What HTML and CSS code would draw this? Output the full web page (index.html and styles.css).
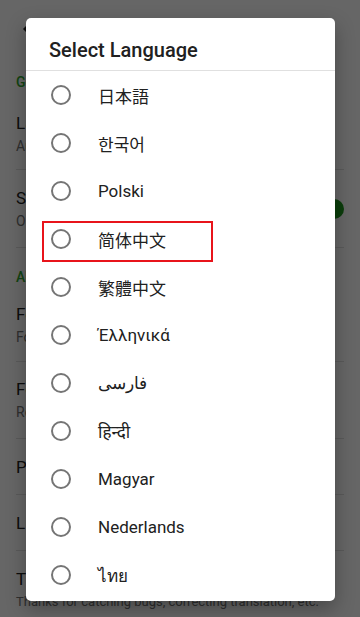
FILE: index.html
```html
<!DOCTYPE html>
<html lang="en">
<head>
    <meta charset="UTF-8">
    <meta name="viewport" content="width=device-width, initial-scale=1.0">
    <title>Settings</title>
    <link rel="stylesheet" href="styles.css">
</head>
<body>
    <!-- Settings screen behind the dialog -->
    <div class="settings">
        <div class="toolbar">
            <svg class="back" width="24" height="24" viewBox="0 0 24 24">
                <path d="M20 11H7.83l5.59-5.59L12 4l-8 8 8 8 1.41-1.41L7.83 13H20v-2z" fill="#212121"/>
            </svg>
        </div>

        <div class="section">General</div>
        <div class="item item-first">
            <div class="item-title">Language</div>
            <div class="item-sub">Auto</div>
        </div>
        <div class="item item-switch">
            <div class="item-text">
                <div class="item-title">Show notifications</div>
                <div class="item-sub">On</div>
            </div>
            <div class="switch"><span class="thumb"></span></div>
        </div>

        <div class="section section-about">About</div>
        <div class="item item-mid">
            <div class="item-title">Feedback</div>
            <div class="item-sub">Found a bug? Let us know</div>
        </div>
        <div class="item">
            <div class="item-title">Fork on GitHub</div>
            <div class="item-sub">Read the source code</div>
        </div>
        <div class="item item-single">
            <div class="item-title">Privacy policy</div>
        </div>
        <div class="item item-single">
            <div class="item-title">Licenses</div>
        </div>
        <div class="item item-last">
            <div class="item-title">Translators</div>
            <div class="item-sub">Thanks for catching bugs, correcting translation, etc.</div>
        </div>
    </div>

    <!-- Dimmed overlay with the language dialog -->
    <div class="overlay">
        <div class="dialog">
            <h2 class="dialog-title">Select Language</h2>
            <ul class="lang-list">
                <li class="lang"><span class="radio"></span><span class="cjk" lang="ja">日本語</span></li>
                <li class="lang"><span class="radio"></span><span class="cjk" lang="ko">한국어</span></li>
                <li class="lang"><span class="radio"></span><span>Polski</span></li>
                <li class="lang"><span class="radio"></span><span class="cjk" lang="zh-CN">简体中文</span></li>
                <li class="lang"><span class="radio"></span><span class="cjk" lang="zh-TW">繁體中文</span></li>
                <li class="lang"><span class="radio"></span><span>Έλληνικά</span></li>
                <li class="lang"><span class="radio"></span><span lang="fa">فارسی</span></li>
                <li class="lang"><span class="radio"></span><span lang="hi">हिन्दी</span></li>
                <li class="lang"><span class="radio"></span><span>Magyar</span></li>
                <li class="lang"><span class="radio"></span><span>Nederlands</span></li>
                <li class="lang"><span class="radio"></span><span lang="th">ไทย</span></li>
            </ul>
        </div>
    </div>

    <!-- Red highlight box around the simplified Chinese row -->
    <div class="highlight"></div>
</body>
</html>
```

FILE: styles.css
```css
/* Page base */
body {
    margin: 0;
    font-family: Roboto, "Noto Sans", sans-serif;
    background-color: #ffffff;
    color: #212121;
    width: 360px;
    height: 617px;
    overflow: hidden;
    position: relative;
}

/* Settings list behind the dialog */
.settings {
    display: flex;
    flex-direction: column;
}

.toolbar {
    height: 52px;
    display: flex;
    align-items: center;
    padding-left: 19px;
    padding-top: 6px;
    box-sizing: border-box;
}

.section {
    color: #2faa2f;
    font-size: 14px;
    font-weight: 500;
    padding: 22px 16px 0;
    height: 50px;
    box-sizing: border-box;
}

.section-about {
    height: 44px;
    padding-top: 21px;
}

.item {
    display: flex;
    flex-direction: column;
    justify-content: center;
    margin: 0 16px;
    height: 77px;
    box-sizing: border-box;
    border-bottom: 1px solid #e0e0e0;
    flex-shrink: 0;
}

.item-first {
    height: 68px;
    padding-bottom: 4px;
}

.item-mid {
    height: 70px;
    padding-bottom: 4px;
}

.item-single {
    height: 56px;
}

.item-last {
    border-bottom: none;
}

.item-switch {
    flex-direction: row;
    align-items: center;
    justify-content: space-between;
    height: 78px;
}

.item-title {
    font-size: 17px;
    line-height: 24px;
}

.item-sub {
    font-size: 14px;
    line-height: 22px;
    color: #757575;
    white-space: nowrap;
}

.item-last .item-sub {
    font-size: 13px;
}

.switch {
    width: 34px;
    height: 14px;
    border-radius: 7px;
    background-color: #9ed49e;
    position: relative;
    margin-right: 3px;
}

.thumb {
    position: absolute;
    right: -3px;
    top: -3px;
    width: 20px;
    height: 20px;
    border-radius: 50%;
    background-color: #1c9a1c;
}

/* Dimmed layer */
.overlay {
    position: absolute;
    inset: 0;
    background-color: rgba(0, 0, 0, 0.6);
}

.dialog {
    position: absolute;
    left: 26px;
    top: 18px;
    width: 309px;
    height: 583px;
    background-color: #ffffff;
    border-radius: 5px;
    box-shadow: 0 8px 20px rgba(0, 0, 0, 0.3);
    display: flex;
    flex-direction: column;
    overflow: hidden;
}

.dialog-title {
    margin: 0;
    height: 53px;
    box-sizing: border-box;
    padding: 19px 23px 0;
    font-size: 20px;
    font-weight: 500;
    line-height: 26px;
    color: #212121;
    border-bottom: 1px solid #e0e0e0;
}

.lang-list {
    list-style: none;
    margin: 0;
    padding: 0;
}

.lang {
    height: 48px;
    display: flex;
    align-items: center;
    padding-left: 25px;
    font-size: 17px;
    color: #212121;
}

.radio {
    width: 16px;
    height: 16px;
    border: 2px solid #757575;
    border-radius: 50%;
    margin-right: 27px;
    flex-shrink: 0;
}

.cjk {
    font-family: "Noto Sans CJK JP", "Noto Sans CJK SC", sans-serif;
}

.cjk:lang(ko) {
    font-family: "Noto Sans CJK KR", sans-serif;
}

.cjk:lang(zh-CN) {
    font-family: "Noto Sans CJK SC", sans-serif;
}

.cjk:lang(zh-TW) {
    font-family: "Noto Sans CJK TC", sans-serif;
}

/* Red annotation box */
.highlight {
    position: absolute;
    left: 42px;
    top: 221px;
    width: 167px;
    height: 37px;
    border: 2px solid #e8141b;
}
```
